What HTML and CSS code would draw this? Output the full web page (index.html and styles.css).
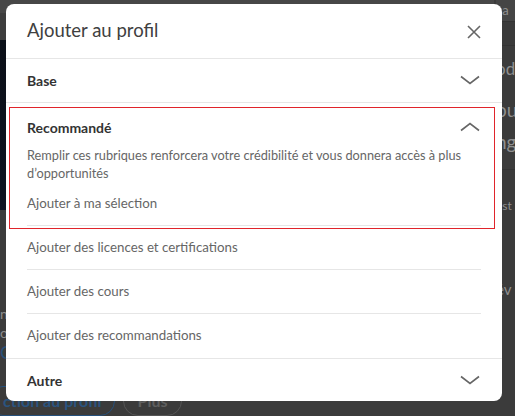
FILE: index.html
```html
<!DOCTYPE html>
<html>

<head>
	<meta charset="utf-8">
	<title>Ajouter au profil</title>
	<link rel="stylesheet" href="styles.css">
</head>

<body>
	<div class="page">
		<div class="main">
			<div class="nav"></div>
			<div class="strip"></div>
			<div class="banner"></div>
			<div class="info">
				<p class="frag">nt</p>
				<p class="frag">o</p>
				<p class="frag link">C</p>
			</div>
			<div class="actions">
				<span class="pill primary">ction au profil</span>
				<span class="pill">Plus</span>
			</div>
		</div>
		<div class="side">
			<div class="side-top">ca</div>
			<div class="side-bar"></div>
			<div class="side-name">od</div>
			<div class="side-big">ou</div>
			<div class="side-big">ng</div>
			<div class="side-small">est</div>
			<div class="side-mid">év</div>
		</div>
	</div>

	<div class="modal">
		<div class="modal-head">
			<h2>Ajouter au profil</h2>
			<svg class="close" width="16" height="16" viewBox="0 0 16 16">
				<path d="M2 2 L14 14 M14 2 L2 14" stroke="#666" stroke-width="1.6" fill="none" />
			</svg>
		</div>

		<div class="section">
			<div class="sec-head">
				<span>Base</span>
				<svg class="chevron" width="20" height="10" viewBox="0 0 20 10">
					<path d="M1 1.5 L10 8.5 L19 1.5" stroke="#666" stroke-width="1.6" fill="none" />
				</svg>
			</div>
		</div>

		<div class="section open">
			<div class="sec-head">
				<span>Recommandé</span>
				<svg class="chevron" width="20" height="10" viewBox="0 0 20 10">
					<path d="M1 8.5 L10 1.5 L19 8.5" stroke="#666" stroke-width="1.6" fill="none" />
				</svg>
			</div>
			<p class="desc">Remplir ces rubriques renforcera votre crédibilité et vous donnera accès à plus d’opportunités</p>
			<ul class="items">
				<li>Ajouter à ma sélection</li>
				<li>Ajouter des licences et certifications</li>
				<li>Ajouter des cours</li>
				<li>Ajouter des recommandations</li>
			</ul>
		</div>

		<div class="section last">
			<div class="sec-head">
				<span>Autre</span>
				<svg class="chevron" width="20" height="10" viewBox="0 0 20 10">
					<path d="M1 1.5 L10 8.5 L19 1.5" stroke="#666" stroke-width="1.6" fill="none" />
				</svg>
			</div>
		</div>
	</div>
</body>

</html>
```

FILE: styles.css
```css
* {
	margin: 0;
	padding: 0;
	box-sizing: border-box;
}
body {
	width: 515px;
	height: 416px;
	overflow: hidden;
	background-color: #3b3b3b;
	font-family: Lato, "Liberation Sans", sans-serif;
	position: relative;
}

/* dimmed page behind the dialog */
.page {
	display: flex;
	height: 416px;
}
.main {
	width: 494px;
	display: flex;
	flex-direction: column;
}
.nav {
	height: 13px;
	background-color: #474747;
}
.strip {
	height: 29px;
	background-color: #3d3d3d;
}
.banner {
	height: 176px;
	background: linear-gradient(170deg, #0b1018 0%, #0d1220 60%, #1b1638 100%);
}
.info {
	height: 178px;
	padding-top: 94px;
	color: #8d8d8d;
	font-size: 14px;
}
.frag {
	line-height: 19px;
}
.info .link {
	color: #27507a;
	font-size: 18px;
	line-height: 20px;
}
.actions {
	display: flex;
	gap: 8px;
	padding-top: 1px;
}
.pill {
	border: 1px solid #555;
	border-radius: 16px;
	padding: 2px 14px;
	font-size: 16px;
	color: #5f5f5f;
	font-weight: 700;
	line-height: 24px;
}
.pill.primary {
	margin-left: -12px;
	border-color: #25507c;
	color: #2a5480;
	padding-right: 12px;
}
.side {
	flex: 1;
	display: flex;
	flex-direction: column;
	color: #8f8f8f;
	padding-left: 2px;
	white-space: nowrap;
	overflow: hidden;
}
.side-top {
	height: 22px;
	font-size: 13px;
	line-height: 20px;
	background-color: #454545;
	border-bottom: 1px solid #333;
}
.side-bar {
	height: 24px;
	background-color: #3a3a3a;
	border-bottom: 1px solid #333;
}
.side-name {
	height: 48px;
	padding-top: 12px;
	font-size: 17px;
}
.side-big {
	height: 32px;
	font-size: 19px;
	line-height: 32px;
}
.side-big + .side-big {
	height: 44px;
	border-bottom: 1px solid #333;
}
.side-small {
	height: 110px;
	padding-top: 28px;
	font-size: 12px;
}
.side-mid {
	font-size: 15px;
}

/* dialog */
.modal {
	position: absolute;
	top: 4px;
	left: 6px;
	width: 496px;
	height: 397px;
	background-color: #ffffff;
	border-radius: 8px;
	overflow: hidden;
}
.modal-head {
	height: 55px;
	display: flex;
	align-items: center;
	justify-content: space-between;
	padding: 0 20px 2px 21px;
	border-bottom: 1px solid #e6e6e6;
}
.modal-head h2 {
	font-size: 18.5px;
	font-weight: 400;
	color: #404040;
}
.close {
	margin-top: 4px;
}
.section {
	border-bottom: 1px solid #e6e6e6;
	position: relative;
}
.section.last {
	border-bottom: none;
}
.sec-head {
	height: 43px;
	display: flex;
	align-items: center;
	justify-content: space-between;
	padding: 0 22px 0 21px;
	font-size: 14px;
	font-weight: 700;
	color: #333333;
}
.sec-head .chevron {
	margin-top: -2px;
}
.open .sec-head {
	height: auto;
	padding-top: 15px;
	padding-bottom: 8px;
	line-height: 20px;
}
.open::after {
	content: "";
	position: absolute;
	top: 4px;
	left: 3px;
	right: 7px;
	height: 120px;
	border: 1px solid #e0242b;
}
.desc {
	padding: 0 21px;
	font-size: 12.75px;
	line-height: 18px;
	color: #666666;
}
.items {
	list-style: none;
	padding: 0 21px;
}
.items li {
	height: 44px;
	line-height: 43px;
	font-size: 13.3px;
	color: #666666;
	border-bottom: 1px solid #e6e6e6;
}
.items li:last-child {
	border-bottom: none;
}
```
